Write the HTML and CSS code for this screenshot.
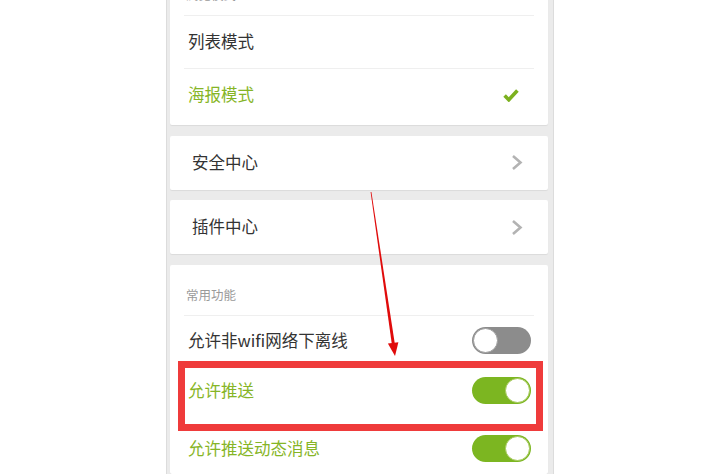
FILE: index.html
```html
<!DOCTYPE html>
<html lang="zh-CN">
<head>
<meta charset="utf-8">
<title>设置</title>
<link rel="stylesheet" href="styles.css">
</head>
<body>
<div class="page">
  <div class="panel">
    <div class="card first">
      <div class="card-header">浏览模式</div>
      <div class="row divided"><span class="label">列表模式</span></div>
      <div class="row"><span class="label active">海报模式</span>
        <svg class="check" width="16" height="13" viewBox="0 0 16 13"><path d="M1.6 6.6 L5.8 10.8 L14.4 1.6" fill="none" stroke="#7cb11f" stroke-width="3.6" stroke-linejoin="miter"/></svg>
      </div>
    </div>
    <div class="card link">
      <span class="label">安全中心</span>
      <svg class="chev" width="12" height="17" viewBox="0 0 12 17"><polyline points="2,2 9.5,8.5 2,15" fill="none" stroke="#b3b3b3" stroke-width="2.6"/></svg>
    </div>
    <div class="card link">
      <span class="label">插件中心</span>
      <svg class="chev" width="12" height="17" viewBox="0 0 12 17"><polyline points="2,2 9.5,8.5 2,15" fill="none" stroke="#b3b3b3" stroke-width="2.6"/></svg>
    </div>
    <div class="card">
      <div class="card-header">常用功能</div>
      <div class="trow"><span class="label">允许非wifi网络下离线</span><span class="toggle off"><span class="knob"></span></span></div>
      <div class="trow"><span class="label active">允许推送</span><span class="toggle on"><span class="knob"></span></span></div>
      <div class="trow last"><span class="label active">允许推送动态消息</span><span class="toggle on"><span class="knob"></span></span></div>
    </div>
  </div>
  <div class="highlight"></div>
  <svg class="arrow" width="724" height="474" viewBox="0 0 724 474">
    <polygon points="370.6,192 371.4,192 394.7,343 391.7,343.3" fill="#e00b0b"/>
    <polygon points="387.9,343.6 398.4,342.2 395,356" fill="#e00b0b"/>
  </svg>
</div>
</body>
</html>
```
FILE: styles.css
```css
html, body {
  margin: 0;
  padding: 0;
  background: #ffffff;
  overflow: hidden;
}
.page {
  position: relative;
  width: 724px;
  height: 474px;
  overflow: hidden;
  font-family: "Noto Sans CJK SC", "Noto Sans", sans-serif;
  color: #333333;
}
.panel {
  margin-top: -35px;
  margin-left: 166px;
  width: 378px;
  padding: 0 5px 0 3px;
  border-left: 1px solid #dcdcdc;
  border-right: 1px solid #dcdcdc;
  background: #ebebeb;
  display: flex;
  flex-direction: column;
  gap: 10.5px;
  height: 560px;
}
.card {
  background: #ffffff;
  box-shadow: 0 1px 1px rgba(0,0,0,0.07);
  border-radius: 2px;
}
.card.first {
  padding-bottom: 4px;
}
.card-header {
  box-sizing: border-box;
  height: 51px;
  margin: 0 14px;
  padding: 21px 0 0 2px;
  line-height: 18px;
  font-size: 12.5px;
  color: #9a9a9a;
  border-bottom: 1px solid #efefef;
}
.label {
  font-size: 16.5px;
  line-height: 20px;
  padding-bottom: 2px;
  white-space: nowrap;
}
.label.active {
  color: #86b526;
}
.row {
  box-sizing: border-box;
  height: 52px;
  margin: 0 14px;
  padding: 0 15px 0 4px;
  display: flex;
  align-items: center;
  justify-content: space-between;
}
.row.divided {
  height: 53px;
  border-bottom: 1px solid #efefef;
}
.check {
  display: block;
}
.card.link {
  box-sizing: border-box;
  height: 54px;
  padding: 0 25px 0 22px;
  display: flex;
  align-items: center;
  justify-content: space-between;
}
.chev {
  display: block;
}
.trow {
  box-sizing: border-box;
  height: 50px;
  padding: 0 17px 0 18px;
  display: flex;
  align-items: center;
  justify-content: space-between;
}
.trow.last {
  margin-top: 8px;
}
.toggle {
  box-sizing: border-box;
  width: 59px;
  height: 27px;
  border-radius: 14px;
  display: flex;
  align-items: center;
  padding: 0 1px;
}
.toggle.off {
  background: #8c8c8c;
  justify-content: flex-start;
}
.toggle.on {
  background: #7cb621;
  justify-content: flex-end;
}
.knob {
  box-sizing: border-box;
  width: 25px;
  height: 25px;
  border-radius: 50%;
  background: #ffffff;
}
.toggle.off .knob {
  border: 1px solid #9d9d9d;
}
.toggle.on .knob {
  border: 1px solid #a5c95c;
}
.highlight {
  position: absolute;
  left: 178px;
  top: 361px;
  width: 365px;
  height: 70px;
  box-sizing: border-box;
  border: 7px solid #ef3b3b;
}
.arrow {
  position: absolute;
  left: 0;
  top: 0;
  pointer-events: none;
}
```
